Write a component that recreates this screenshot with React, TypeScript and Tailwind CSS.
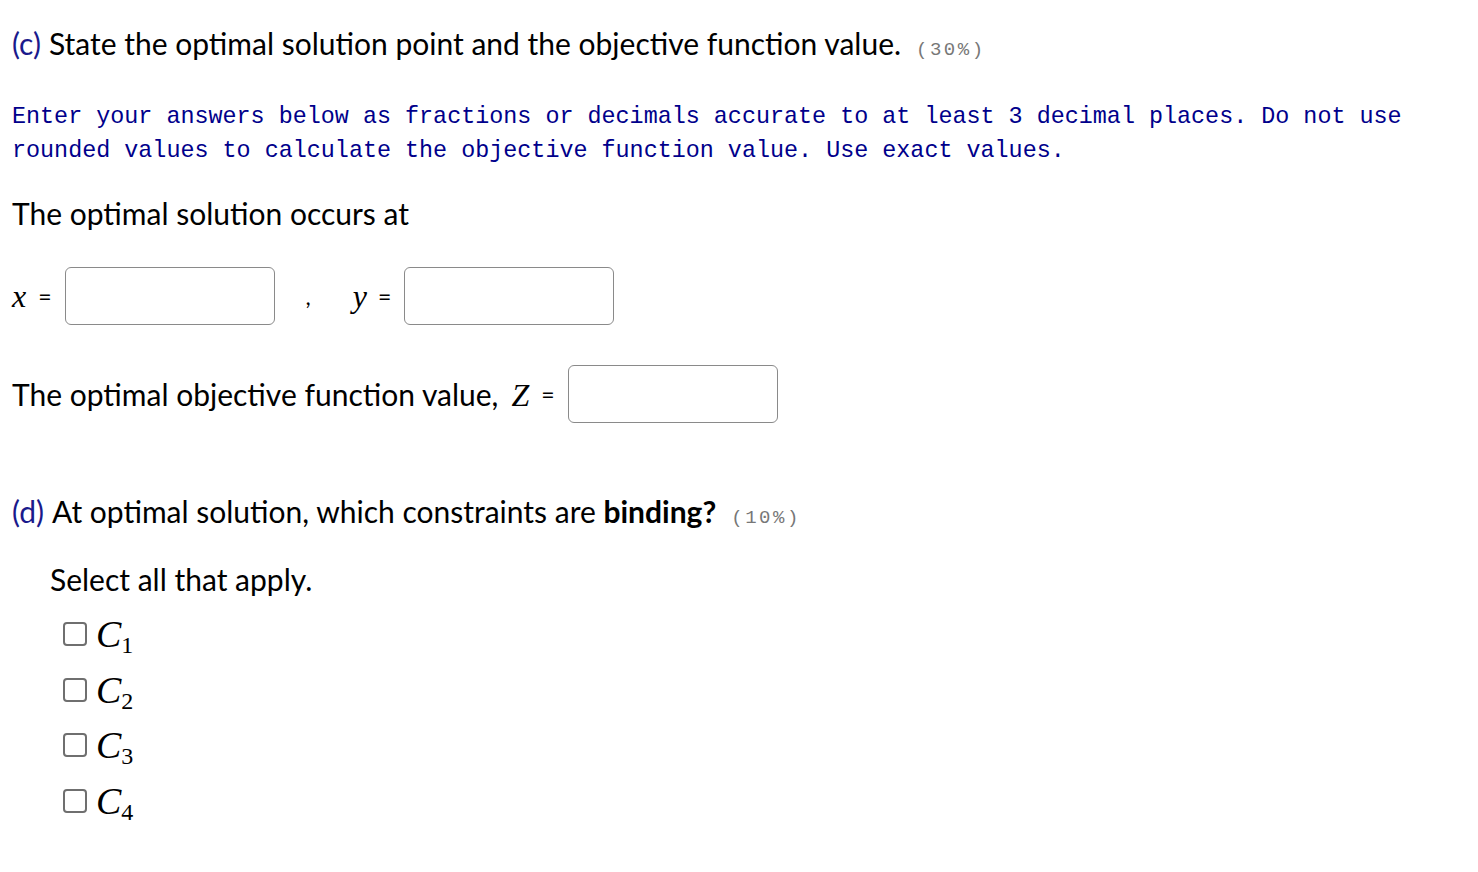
import React from "react";

const sans = { fontFamily: "Lato, 'Noto Sans', sans-serif" };

function Pct({ value }: { value: string }) {
  return (
    <span className="ml-[15px] text-[19px] tracking-[2.5px] text-[#777]" style={{ fontFamily: "'Liberation Mono', monospace" }}>
      ({value})
    </span>
  );
}

function Box() {
  return <div className="h-[58px] w-[210px] rounded-[6px] border border-[#8a8a8a] bg-white" />;
}

function MathVar({ children }: { children: React.ReactNode }) {
  return (
    <span className="italic" style={{ fontFamily: "'Liberation Serif', serif" }}>
      {children}
    </span>
  );
}

export default function App() {
  const constraints = ["1", "2", "3", "4"];
  return (
    <div className="min-h-[872px] w-[1478px] bg-white pl-[12px] text-black" style={sans}>
      <div className="flex h-[88px] items-baseline pt-[21px] text-[30px]">
        <span className="text-[#1a1a8c]">(c)</span>
        <span className="ml-[8px]">State the optimal solution point and the objective function value.</span>
        <Pct value="30%" />
      </div>

      <p
        className="mt-[12px] text-[23.4px] leading-[34px] text-[#00008b]"
        style={{ fontFamily: "'Liberation Mono', monospace" }}
      >
        Enter your answers below as fractions or decimals accurate to at least 3 decimal places. Do not use
        <br />
        rounded values to calculate the objective function value. Use exact values.
      </p>

      <div className="mt-[29px] flex h-[32px] items-center text-[30px]">The optimal solution occurs at</div>

      <div className="mt-[38px] flex h-[58px] items-center text-[23px]">
        <MathVar>
          <span className="text-[32px]">x</span>
        </MathVar>
        <span className="ml-[12px] mr-[13px]">=</span>
        <Box />
        <span className="ml-[31px] mr-[42px]">,</span>
        <MathVar>
          <span className="text-[32px]">y</span>
        </MathVar>
        <span className="ml-[11px] mr-[13px]">=</span>
        <Box />
      </div>

      <div className="mt-[40px] flex h-[58px] items-center text-[30px]">
        <span>The optimal objective function value,</span>
        <span className="ml-[13px] text-[32px]">
          <MathVar>Z</MathVar>
        </span>
        <span className="ml-[12px] mr-[13px] text-[23px]">=</span>
        <Box />
      </div>

      <div className="mt-[62px] flex h-[42px] items-baseline pt-[4px] text-[30px]">
        <span className="text-[#1a1a8c]">(d)</span>
        <span className="ml-[8px]">
          At optimal solution, which constraints are <b>binding?</b>
        </span>
        <Pct value="10%" />
      </div>

      <div className="ml-[38px] mt-[36px] flex h-[32px] items-center text-[30px]">Select all that apply.</div>

      <div className="ml-[51px] mt-[27px] flex flex-col gap-[31.5px]">
        {constraints.map((n) => (
          <label key={n} className="flex h-[24px] items-center">
            <span className="h-[24px] w-[24px] rounded-[4px] border-2 border-[#6f6f6f] bg-white" />
            <span className="ml-[9px] flex items-baseline" style={{ fontFamily: "'Liberation Serif', serif" }}>
              <span className="text-[38px] italic leading-none">C</span>
              <span className="relative top-[6px] text-[24px] leading-none">{n}</span>
            </span>
          </label>
        ))}
      </div>
    </div>
  );
}
